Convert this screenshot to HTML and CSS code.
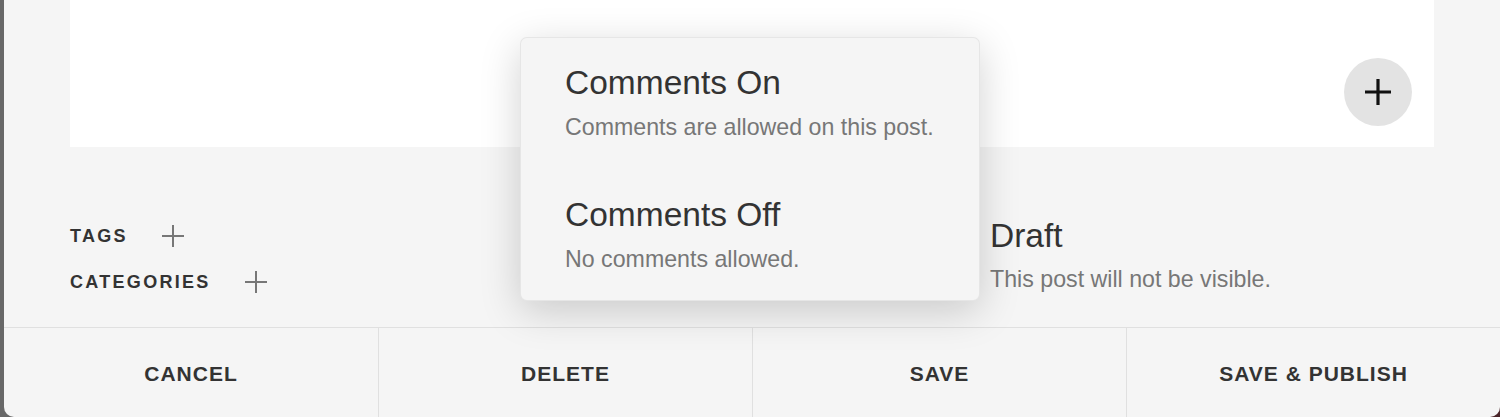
FILE: index.html
```html
<!DOCTYPE html>
<html lang="en">
<head>
    <meta charset="UTF-8">
    <title>Edit Post</title>
    <link rel="stylesheet" href="styles.css">
</head>
<body>

    <div class="panel">
        <!-- Editor area -->
        <div class="editor">
            <button class="add-block" type="button">
                <svg width="30" height="30" viewBox="0 0 30 30">
                    <path d="M15 2v26M2 15h26" stroke="#111" stroke-width="3.2" fill="none"/>
                </svg>
            </button>
        </div>

        <!-- Post options -->
        <div class="meta">
            <div class="taxonomy">
                <div class="tax-row">
                    <span class="tax-label">TAGS</span>
                    <svg class="tax-add" width="22" height="22" viewBox="0 0 22 22">
                        <path d="M11 0v22M0 11h22" stroke="#777" stroke-width="2" fill="none"/>
                    </svg>
                </div>
                <div class="tax-row">
                    <span class="tax-label">CATEGORIES</span>
                    <svg class="tax-add" width="22" height="22" viewBox="0 0 22 22">
                        <path d="M11 0v22M0 11h22" stroke="#777" stroke-width="2" fill="none"/>
                    </svg>
                </div>
            </div>

            <div class="status">
                <div class="opt-title">Draft</div>
                <div class="opt-desc">This post will not be visible.</div>
            </div>

            <!-- Comments dropdown -->
            <div class="dropdown">
                <div class="dropdown-item">
                    <div class="opt-title">Comments On</div>
                    <div class="opt-desc">Comments are allowed on this post.</div>
                </div>
                <div class="dropdown-item">
                    <div class="opt-title">Comments Off</div>
                    <div class="opt-desc">No comments allowed.</div>
                </div>
            </div>
        </div>

        <!-- Actions -->
        <div class="actions">
            <button type="button">CANCEL</button>
            <button type="button">DELETE</button>
            <button type="button">SAVE</button>
            <button type="button">SAVE &amp; PUBLISH</button>
        </div>
    </div>

</body>
</html>
```

FILE: styles.css
```css
html, body {
    margin: 0;
    padding: 0;
    height: 417px;
    overflow: hidden;
}

body {
    font-family: 'Liberation Sans', Arial, sans-serif;
    background: linear-gradient(to right, #686868 0, #686868 50%, #4a2529 50%);
}

.panel {
    margin-left: 4px;
    height: 417px;
    background-color: #f5f5f5;
    border-radius: 0 0 10px 10px;
    display: flex;
    flex-direction: column;
}

.editor {
    margin: 0 66px;
    height: 147px;
    background: #fff;
    display: flex;
    justify-content: flex-end;
    align-items: flex-end;
    padding: 0 22px 21px 0;
    box-sizing: border-box;
}

.add-block {
    width: 68px;
    height: 68px;
    border-radius: 50%;
    border: none;
    background-color: #e3e3e3;
    display: flex;
    align-items: center;
    justify-content: center;
    padding: 0;
    cursor: pointer;
}

.meta {
    position: relative;
    height: 181px;
    display: flex;
    padding: 69px 0 0 66px;
    box-sizing: border-box;
    border-bottom: 1px solid #e0e0e0;
}

.taxonomy {
    width: 920px;
    padding-top: 8px;
    display: flex;
    flex-direction: column;
    gap: 22px;
}

.tax-row {
    display: flex;
    align-items: center;
    height: 24px;
}

.tax-label {
    font-size: 18px;
    font-weight: bold;
    letter-spacing: 2.3px;
    color: #333;
    margin-right: 34px;
}

.opt-title {
    font-size: 33.5px;
    line-height: 40px;
    color: #333;
}

.opt-desc {
    font-size: 23.2px;
    line-height: 28px;
    color: #777;
    margin-top: 9px;
}

.dropdown {
    position: absolute;
    left: 516px;
    top: -110px;
    width: 460px;
    height: 264px;
    box-sizing: border-box;
    padding: 25px 0 0 44px;
    background-color: #f5f5f5;
    border: 1px solid rgba(0, 0, 0, 0.06);
    border-radius: 7px;
    box-shadow: 0 10px 40px rgba(0, 0, 0, 0.18);
}

.dropdown-item + .dropdown-item {
    margin-top: 54px;
}

.dropdown-item .opt-desc {
    margin-top: 10px;
}

.actions {
    flex: 1;
    display: grid;
    grid-template-columns: repeat(4, 1fr);
}

.actions button {
    border: none;
    background: none;
    font-family: 'Liberation Sans', Arial, sans-serif;
    font-size: 21px;
    font-weight: bold;
    letter-spacing: 1px;
    color: #333;
    padding: 2px 0 0;
    cursor: pointer;
}

.actions button + button {
    border-left: 1px solid #e0e0e0;
}
```
